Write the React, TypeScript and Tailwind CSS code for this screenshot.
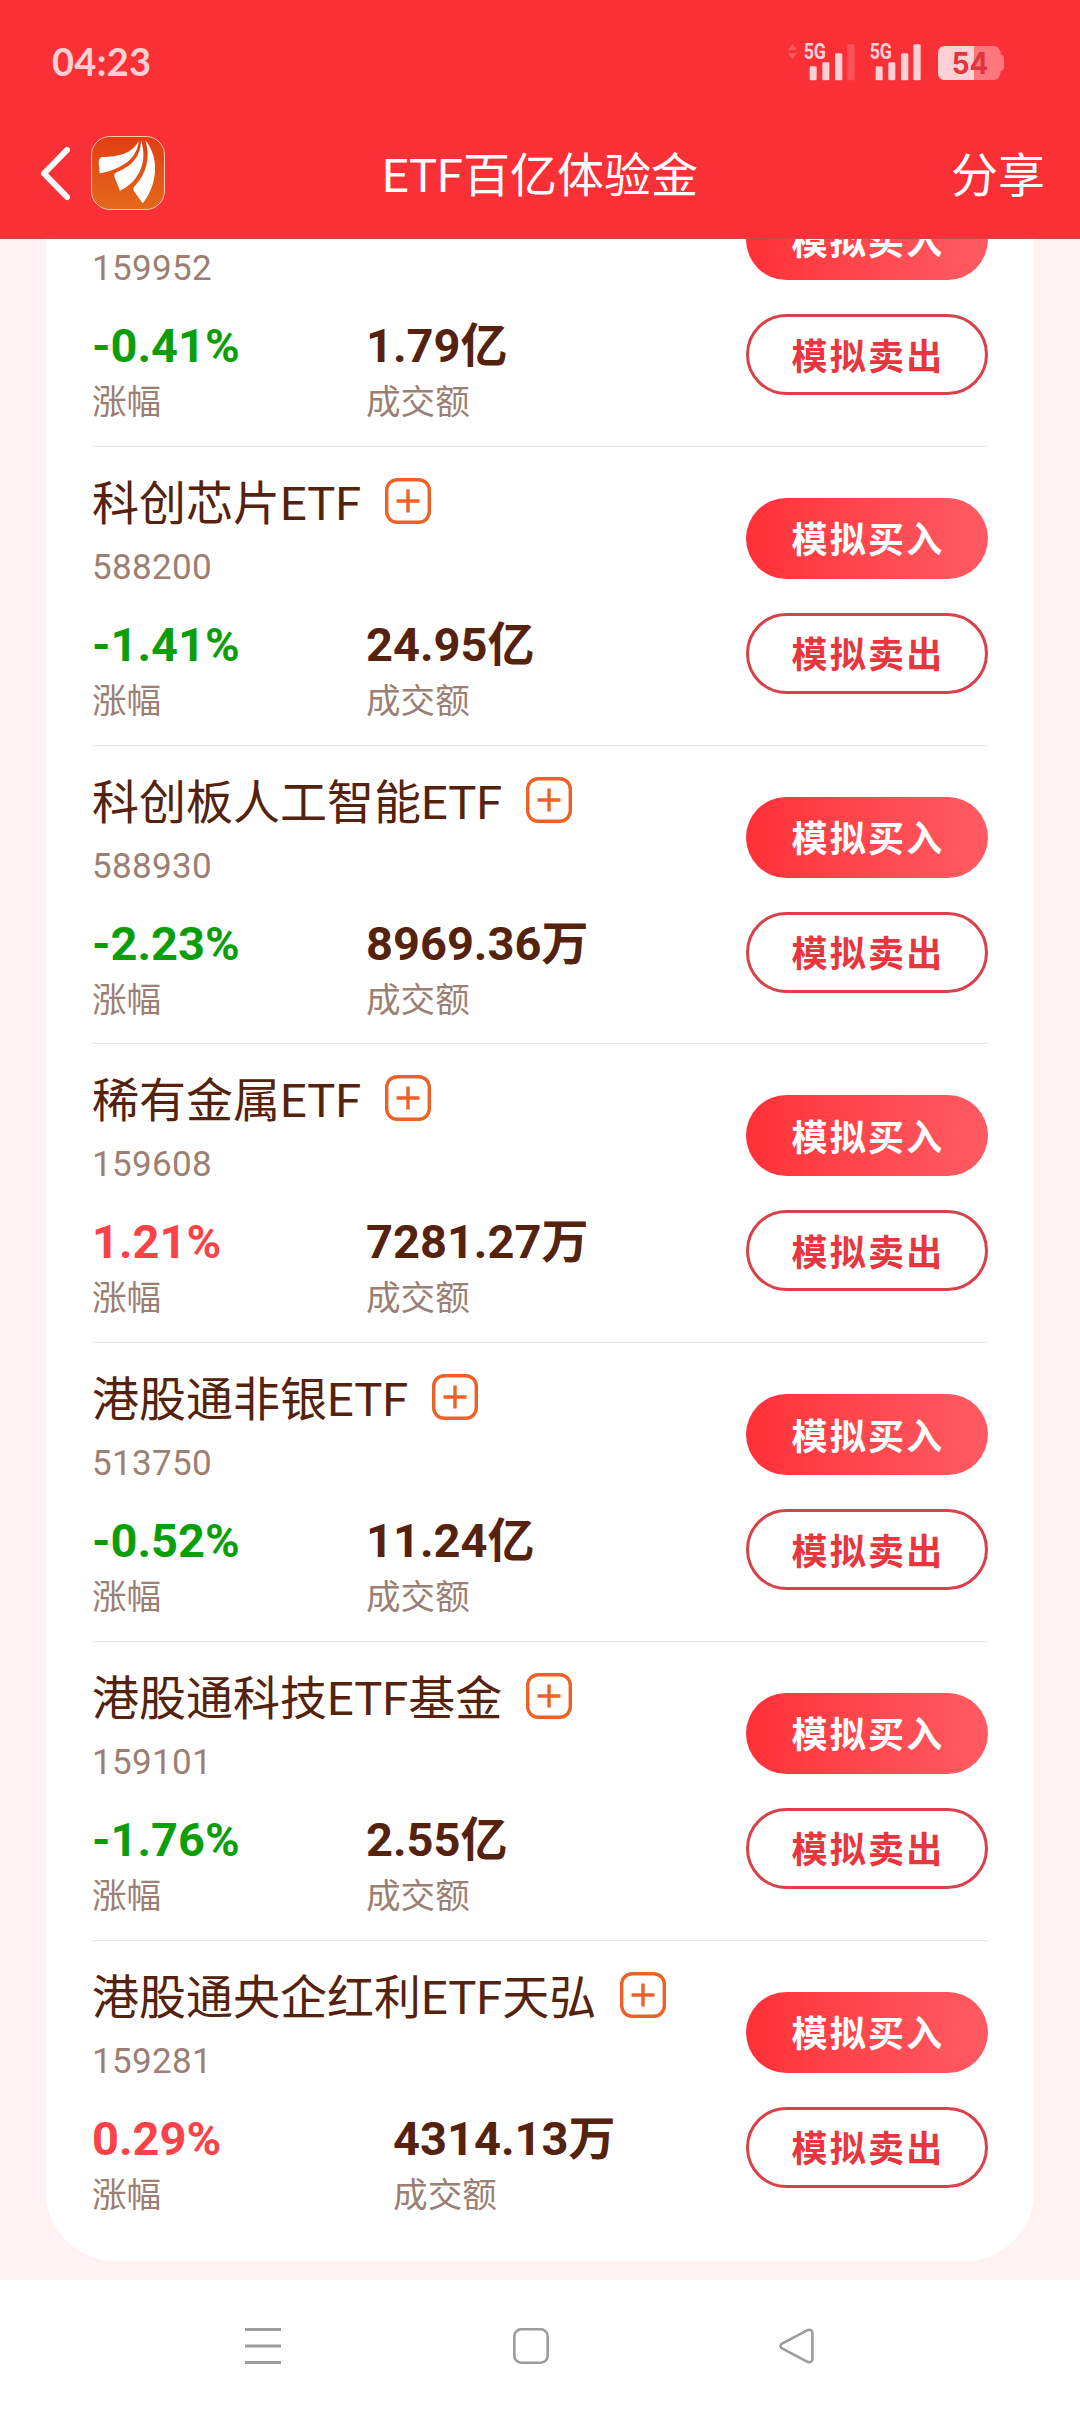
interface Fund {
  name?: string;
  code: string;
  change: string;
  amount: string;
}

const FUNDS: Fund[] = [
  { code: '159952', change: '-0.41%', amount: '1.79亿' },
  { name: '科创芯片ETF', code: '588200', change: '-1.41%', amount: '24.95亿' },
  { name: '科创板人工智能ETF', code: '588930', change: '-2.23%', amount: '8969.36万' },
  { name: '稀有金属ETF', code: '159608', change: '1.21%', amount: '7281.27万' },
  { name: '港股通非银ETF', code: '513750', change: '-0.52%', amount: '11.24亿' },
  { name: '港股通科技ETF基金', code: '159101', change: '-1.76%', amount: '2.55亿' },
  { name: '港股通央企红利ETF天弘', code: '159281', change: '0.29%', amount: '4314.13万' },
];

function SignalIcon({ weak }: { weak?: boolean }) {
  return (
    <svg className="overflow-visible" width="52" height="38" viewBox="0 0 156 114" fill="#ffd0d4">
      <text x="2" y="49" fontSize="66" fontWeight="700" fontFamily="Roboto" textLength="67" lengthAdjust="spacingAndGlyphs">
        5G
      </text>
      <rect x="20" y="70" width="21" height="42" rx="4" />
      <rect x="58" y="58" width="21" height="54" rx="4" />
      <rect x="96" y="31" width="22" height="81" rx="4" />
      <rect x="133" y="4" width="22" height="108" rx="4" opacity={weak ? 0.22 : 1} />
    </svg>
  );
}

function BatteryIcon() {
  return (
    <svg width="66" height="34" viewBox="0 0 198 102">
      <path d="M108 0H168Q186 0 188 24Q198 28 198 36V64Q198 72 188 76Q186 102 168 102H108Z" fill="#ff777c" />
      <path d="M108 0H22Q0 0 0 22V80Q0 102 22 102H108Z" fill="#ffd0d4" />
      <text x="41" y="83" fontSize="90" fontWeight="700" fontFamily="Inter" fill="#e0343f" textLength="110" lengthAdjust="spacingAndGlyphs">
        54
      </text>
    </svg>
  );
}

function StatusBar() {
  return (
    <div className="flex h-[103px] items-start justify-between pl-[52px] pr-[76px]">
      <span className="mt-[37px] font-['Lato',sans-serif] text-[38px] leading-[48px] font-bold tracking-[0.3px] text-[#ffcfd2]">04:23</span>
      <div className="mt-[43px] flex items-start">
        <svg className="mt-[1px] mr-[6px]" width="9" height="15" viewBox="0 0 9 15" fill="#fd5b60">
          <path d="M4.5 0L9 6H0ZM4.5 15L0 9H9Z" />
        </svg>
        <SignalIcon weak />
        <div className="w-[14px]" />
        <SignalIcon />
        <div className="mt-[3px] ml-[17px]">
          <BatteryIcon />
        </div>
      </div>
    </div>
  );
}

function AppLogo() {
  return (
    <div className="h-[74px] w-[74px] overflow-hidden rounded-[19px] border border-[#ffc9b0] bg-linear-to-b from-[#e23c12] to-[#e4681a]">
      <svg width="72" height="72" viewBox="186 20 216 217" preserveAspectRatio="none" fill="#fff">
        <path d="M326 32C308 68 270 80 216 80Q206 84 206 96L209 130C262 120 322 92 326 32Z" />
        <path d="M333 30C332 85 298 112 258 127Q251 131 253 139L270 182C322 158 356 100 333 30Z" />
        <path d="M346 30C362 80 350 130 316 166Q308 172 311 182L338 220C372 180 398 95 346 30Z" />
      </svg>
    </div>
  );
}

function TitleBar() {
  return (
    <div className="grid h-[136px] grid-cols-[1fr_auto_1fr] items-center border-b border-[#cb464d] pr-[35px] pl-[38px]">
      <div className="mt-[5px] flex items-center">
        <svg width="36" height="56" viewBox="0 0 36 56" fill="none" stroke="#fff" strokeWidth="6" strokeLinecap="round" strokeLinejoin="round">
          <path d="M29 5L6 28.5L29 52" />
        </svg>
        <div className="ml-[17px]">
          <AppLogo />
        </div>
      </div>
      <h1 className="mt-[10px] mr-[3px] text-[47px] leading-[60px] font-normal text-white">ETF百亿体验金</h1>
      <span className="mt-[10px] text-right text-[47px] leading-[60px] text-white">分享</span>
    </div>
  );
}

function AddIcon() {
  return (
    <svg className="mr-[28px] mb-[6px] ml-[24px] shrink-0" width="46" height="46" viewBox="0 0 46 46" fill="none" stroke="#ec6226" strokeWidth="3.4">
      <rect x="1.7" y="1.7" width="42.6" height="42.6" rx="10.5" />
      <path d="M23 11.5V34.5M11.5 23H34.5" />
    </svg>
  );
}

function FundRow({ fund }: { fund: Fund }) {
  const down = fund.change.startsWith('-');

  return (
    <div className="flex h-[298.8px] items-start justify-between border-b border-[#e6e6e6] last:h-[320px] last:border-b-0">
      <div className="w-fit min-w-[548px] pt-[27px]">
        {/* Name + code */}
        <div className="flex h-[60px] items-center text-[47px] leading-[60px] whitespace-nowrap text-[#55220d]">
          {fund.name && (
            <>
              <span>{fund.name}</span>
              <AddIcon />
            </>
          )}
        </div>
        <div className="text-[35px] leading-[68px] tracking-[0.35px] text-[#9b7f73]">{fund.code}</div>

        {/* Stats */}
        <div className="mt-[14px] grid grid-cols-2">
          <div>
            <div
              className={`text-[47px] leading-[58px] font-bold ${down ? 'text-[#0a9f0a]' : 'text-[#fa4348]'}`}
            >
              {fund.change}
            </div>
            <div className="text-[34.6px] leading-[54px] text-[#9b7f73]">涨幅</div>
          </div>
          <div>
            <div className="text-[47px] leading-[58px] font-bold whitespace-nowrap text-[#55220d]">
              {fund.amount}
            </div>
            <div className="text-[34.6px] leading-[54px] text-[#9b7f73]">成交额</div>
          </div>
        </div>
      </div>

      {/* Actions */}
      <div className="flex flex-col gap-[34px] pt-[51px]">
        <button className="h-[81px] w-[242px] rounded-full bg-linear-to-r from-[#ff2f37] to-[#ff5a62] pt-[6px] pl-[2px] text-[36px] font-bold tracking-[2.2px] text-white">
          模拟买入
        </button>
        <button className="h-[81px] w-[242px] rounded-full border-[3px] border-[#d8404a] pt-[6px] pl-[2px] text-[36px] font-bold tracking-[2.2px] text-[#e8363e]">
          模拟卖出
        </button>
      </div>
    </div>
  );
}

function NavBar() {
  return (
    <nav className="flex h-[132px] items-center bg-[#fefefe] pl-[245px]">
      <svg width="36" height="36" viewBox="0 0 36 36" stroke="#9c9c9c" strokeWidth="3">
        <path d="M0 1.5H36M0 18H36M0 34.5H36" />
      </svg>
      <svg className="ml-[232px]" width="36" height="36" viewBox="0 0 36 36" fill="none" stroke="#9c9c9c" strokeWidth="2.6">
        <rect x="1.3" y="1.3" width="33.4" height="33.4" rx="7" />
      </svg>
      <svg className="ml-[230px]" width="36" height="36" viewBox="0 0 36 36" fill="none" stroke="#9c9c9c" strokeWidth="2.6" strokeLinejoin="round">
        <path d="M3 15.6L28.5 2.2Q33 0.5 33.4 5V31Q33 35.5 28.5 33.8L3 20.4Q0 18 3 15.6Z" />
      </svg>
    </nav>
  );
}

export default function App() {
  return (
    <div className="flex h-[2412px] w-[1080px] flex-col overflow-hidden bg-[#fef2f2] font-['Roboto','Noto_Sans_CJK_SC',sans-serif]">
      <header className="shrink-0 bg-[#fa3037]">
        <StatusBar />
        <TitleBar />
      </header>
      <main className="flex-1 overflow-hidden px-[46px]">
        <div className="-mt-[91px] rounded-b-[69px] bg-white px-[46px]">
          {FUNDS.map((fund) => (
            <FundRow key={fund.code} fund={fund} />
          ))}
        </div>
      </main>
      <NavBar />
    </div>
  );
}
